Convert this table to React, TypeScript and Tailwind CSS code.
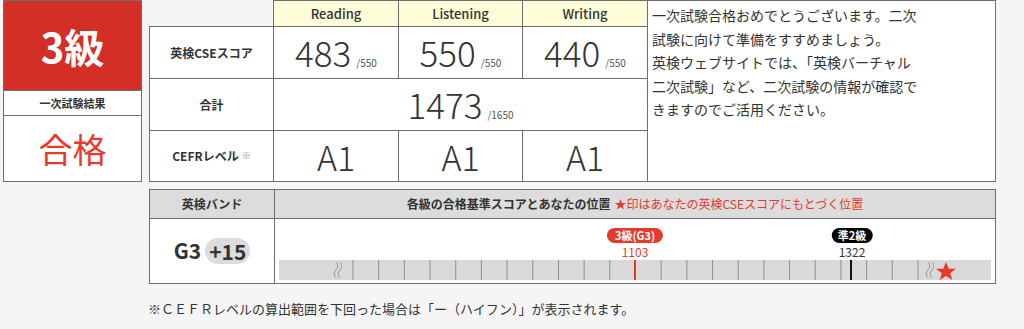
import React from 'react';

const font = { fontFamily: '"Noto Sans CJK JP", "Noto Sans", sans-serif' };

const ScoreCell = ({ score, max, span }: { score: string; max: string; span?: boolean }) => {
  return (
    <div
      className={`flex items-baseline justify-center bg-white border-r border-b border-[#6e6e6e] ${span ? 'col-span-3' : ''}`}
    >
      <span className="text-[35px] font-light leading-[50px] text-[#333]">{score}</span>
      <span className="ml-[5px] text-[10px] text-[#555]">/{max}</span>
    </div>
  );
};

const LabelCell = ({ children }: { children: React.ReactNode }) => {
  return (
    <div className="flex items-center justify-center bg-white border-l border-r border-b border-[#6e6e6e] text-[12px] font-bold text-[#333]">
      {children}
    </div>
  );
};

const ScoreBar = () => {
  const ticks = Array.from({ length: 23 }, (_, i) => 74 + i * 25.68);
  return (
    <div className="relative w-[712px] h-[20px]">
      <div className="absolute left-[356px] top-[-32px] -translate-x-1/2 flex flex-col items-center">
        <span className="rounded-full bg-[#e53a2c] px-[8px] text-[11px] font-bold leading-[15px] text-white whitespace-nowrap">
          3級(G3)
        </span>
        <span className="mt-[2px] text-[12px] leading-[14px] text-[#e53a2c]">1103</span>
      </div>
      <div className="absolute left-[573px] top-[-32px] -translate-x-1/2 flex flex-col items-center">
        <span className="rounded-full bg-black px-[6px] text-[11px] font-bold leading-[15px] text-white whitespace-nowrap">
          準2級
        </span>
        <span className="mt-[2px] text-[12px] leading-[14px] text-[#333]">1322</span>
      </div>
      <svg width="712" height="20" viewBox="0 0 712 20" className="block">
        <rect x="0" y="0" width="712" height="20" fill="#d9d9d9" />
        {ticks.map((x, i) => (
          <line key={i} x1={x} y1="0" x2={x} y2="20" stroke="#8f8f8f" strokeWidth="1" />
        ))}
        <line x1="356" y1="0" x2="356" y2="20" stroke="#e53a2c" strokeWidth="2" />
        <line x1="572" y1="0" x2="572" y2="20" stroke="#111" strokeWidth="2" />
        {[57, 61, 649, 653].map((x) => (
          <path
            key={x}
            d={`M${x} 2 q3.5 4 0 8 q-3.5 4 0 8`}
            fill="none"
            stroke="#9a9a9a"
            strokeWidth="1"
          />
        ))}
        <polygon
          points="667,2 669.7,8.8 677,8.8 671.2,13.2 673.3,20 667,15.9 660.7,20 662.8,13.2 657,8.8 664.3,8.8"
          fill="#e53a2c"
        />
      </svg>
    </div>
  );
};

const App = () => {
  return (
    <div className="min-h-[329px] w-[1024px] bg-[#f5f5f5] text-[#333]" style={font}>
      <div className="flex items-start gap-[7px] pl-[3px]">
        {/* left result box */}
        <div className="flex w-[139px] h-[182px] flex-col border border-[#6e6e6e] bg-white">
          <div className="flex h-[89px] items-center justify-center bg-[#d32f27] text-[40px] font-bold text-white">
            3級
          </div>
          <div className="flex h-[26px] items-center justify-center border-t border-b border-[#6e6e6e] text-[11px] font-bold">
            一次試験結果
          </div>
          <div className="flex flex-1 items-center justify-center text-[34px] text-[#e8392b]">合格</div>
        </div>

        <div className="flex w-[847px] flex-col">
          <div className="flex">
            <div className="grid w-[499px] grid-cols-[125px_125px_124px_125px] grid-rows-[27px_52px_52px_51px]">
              <div className="border-r border-b border-[#6e6e6e]" />
              {['Reading', 'Listening', 'Writing'].map((h) => (
                <div
                  key={h}
                  className="flex items-center justify-center border-t border-r border-b border-[#6e6e6e] bg-[#fefdd9] text-[13px] font-medium"
                >
                  {h}
                </div>
              ))}
              <LabelCell>英検CSEスコア</LabelCell>
              <ScoreCell score="483" max="550" />
              <ScoreCell score="550" max="550" />
              <ScoreCell score="440" max="550" />
              <LabelCell>合計</LabelCell>
              <ScoreCell score="1473" max="1650" span />
              <LabelCell>
                CEFRレベル <span className="ml-[3px] text-[9px] font-normal text-[#888]">※</span>
              </LabelCell>
              {['A1', 'A1', 'A1'].map((a, i) => (
                <div
                  key={i}
                  className="flex items-center justify-center border-r border-b border-[#6e6e6e] bg-white text-[34px] font-light"
                >
                  {a}
                </div>
              ))}
            </div>
            <div className="h-[182px] w-[348px] border-t border-r border-b border-[#6e6e6e] bg-white pl-[4px] pt-[3px]">
              <p className="w-[268px] text-[14px] leading-[23.5px] text-[#333]">
                一次試験合格おめでとうございます。二次試験に向けて準備をすすめましょう。
                <br />
                英検ウェブサイトでは、「英検バーチャル二次試験」など、二次試験の情報が確認できますのでご活用ください。
              </p>
            </div>
          </div>

          {/* band box */}
          <div className="mt-[7px] grid grid-cols-[125px_1fr] grid-rows-[30px_65px] border-l border-r border-[#6e6e6e]">
            <div className="flex items-center justify-center border-t border-r border-b border-[#6e6e6e] bg-[#dcdcdc] text-[12px] font-bold">
              英検バンド
            </div>
            <div className="flex items-center justify-center border-t border-b border-[#6e6e6e] bg-[#dcdcdc] text-[12px] font-bold">
              各級の合格基準スコアとあなたの位置
              <span className="ml-[4px] font-normal text-[#e53a2c]">★印はあなたの英検CSEスコアにもとづく位置</span>
            </div>
            <div className="flex items-center justify-center border-r border-b border-[#6e6e6e] bg-white">
              <span className="text-[21px] font-bold">G3</span>
              <span className="ml-[4px] rounded-full bg-[#dcdcdc] px-[4px] text-[21px] font-bold leading-[26px]">
                +15
              </span>
            </div>
            <div className="flex items-end border-b border-[#6e6e6e] bg-white pb-[3px] pl-[4px]">
              <ScoreBar />
            </div>
          </div>

          <p className="mt-[15px] -ml-[1px] text-[13px] text-[#333]">
            ※ＣＥＦＲレベルの算出範囲を下回った場合は「ー（ハイフン）」が表示されます。
          </p>
        </div>
      </div>
    </div>
  );
};

export default App;
